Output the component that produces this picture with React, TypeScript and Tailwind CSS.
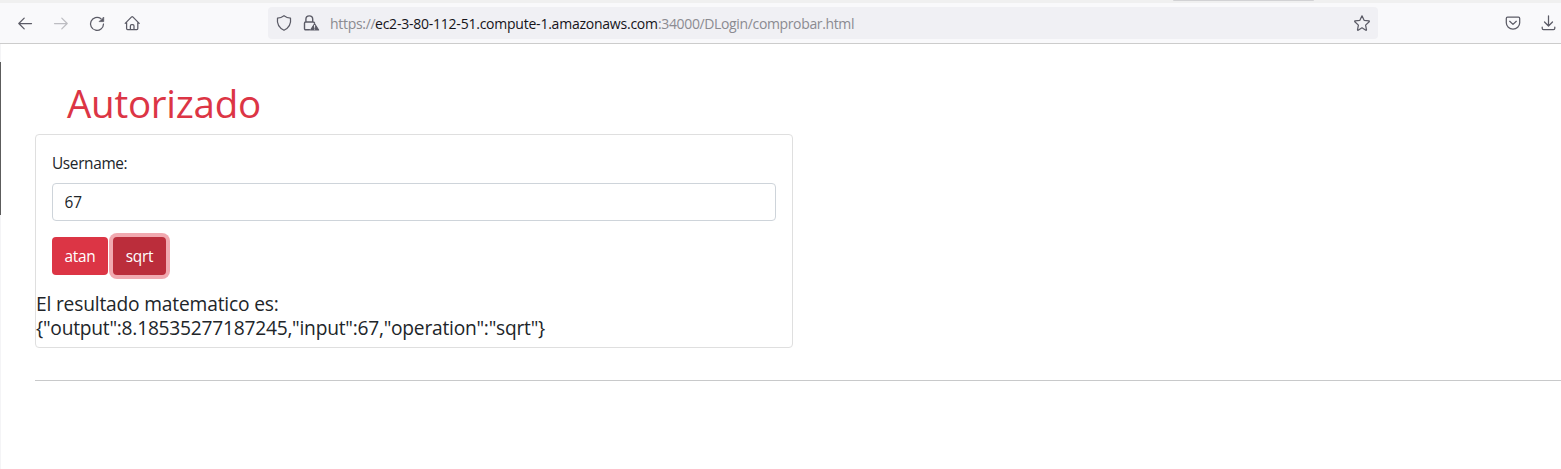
import type { ReactNode } from "react";

function Icon({ children, className = "" }: { children: ReactNode; className?: string }) {
  return (
    <svg
      viewBox="0 0 16 16"
      className={`size-4 shrink-0 overflow-visible ${className}`}
      fill="none"
      stroke="currentColor"
      strokeWidth="1.25"
      strokeLinecap="round"
      strokeLinejoin="round"
    >
      {children}
    </svg>
  );
}

function Toolbar() {
  return (
    <header className="flex h-[44px] flex-col border-b border-[#cccccc] bg-[#f9f9fb] text-[#5b5b66]">
      <div className="flex h-[3px] shrink-0 bg-[#f0f0f0] pl-[1173px]">
        <div className="h-[1px] w-[141px] rounded-b-sm bg-[#d2d2d4]" />
      </div>
      <div className="flex h-[40px] items-center pl-[17px]">
        <Icon>
          <path d="M14.5 8.5H1.8M7.2 3.1 1.8 8.5l5.4 5.4" />
        </Icon>
        <Icon className="ml-5 text-[#bdbdc2]">
          <path d="M1.5 8.5h12.7M8.8 3.1l5.4 5.4-5.4 5.4" />
        </Icon>
        <Icon className="ml-5">
          <path d="M11.8 3.6A6.5 6.5 0 1 0 14.5 9" />
          <path d="M14.7 2.4v4.200H10.500z" fill="currentColor" strokeWidth="0.8" />
        </Icon>
        <Icon className="ml-[19px]">
          <path d="M1.2 8.4 7.6 1.9q.6-.5 1.2 0l6.4 6.5M2.6 7.4v6.1q0 1 1 1h9.2q1 0 1-1V7.4M6.4 14.2v-3.3q0-1.2 1.2-1.2h1.2q1.2 0 1.2 1.2v3.3" />
        </Icon>
        <div className="ml-[128px] flex h-8 w-[1110px] items-center rounded bg-[#f0f0f4] pr-2 pl-2">
          <Icon>
            <path d="M8 .7C10 2.200 12.300 3 14.500 3.200c.7 5.200-1.700 9.800-6.500 12.100C3.200 13 .8 8.400 1.500 3.200 3.700 3 6 2.200 8 .7z" />
          </Icon>
          <Icon className="ml-[11px]">
            <path d="M6.500 14.700H2.700q-1.200 0-1.200-1.200V8.200q0-1.200 1.200-1.200h7.600q1 0 1.200 1M2.900 7V4.300a3.400 3.400 0 0 1 6.800 0V7" strokeWidth="1.4" />
            <path d="M11.600 8.700 15.600 15H7.600z" fill="currentColor" strokeWidth="1.2" />
            <path d="M11.600 10.400v2M11.600 14v.2" stroke="#f0f0f4" strokeWidth="1" />
          </Icon>
          <div className="mt-px ml-[11px] flex font-['Open_Sans','Noto_Sans',sans-serif] text-[14px] leading-5 whitespace-pre text-[#8b8b91]">
            <span className="w-[45px] tracking-[-0.3px]">https://</span>
            <span className="w-[283px] tracking-[-0.23px] text-[#15141a]">ec2-3-80-112-51.compute-1.amazonaws.com</span>
            <span className="tracking-[-0.36px]">:34000/DLogin/comprobar.html</span>
          </div>
          <Icon className="ml-auto">
            <path d="m8 .8 2.100 4.500 4.900.6q.6.200.2.800l-3.600 3.400.9 4.700q0 .7-.7.400L8 12.800l-3.800 2.400q-.7.300-.7-.4l.9-4.700L.8 6.700q-.4-.6.200-.8l4.900-.6z" />
          </Icon>
        </div>
        <Icon className="ml-[127px]">
          <path d="M2.500 2.200h11q1.200 0 1.200 1.200v4.400a6.700 6.300 0 0 1-13.400 0V3.400q0-1.200 1.200-1.200zM4.700 6.300 8 9.400l3.300-3.100" />
        </Icon>
        <Icon className="ml-5">
          <path d="M7.500.8v10.100M3.500 7l4 4 4-4M1.200 12v1.200q0 1.300 1.300 1.300h10q1.300 0 1.300-1.300V12" />
        </Icon>
      </div>
    </header>
  );
}

export default function App() {
  return (
    <div className="h-[469px] w-[1561px] overflow-hidden bg-white font-['Open_Sans','Noto_Sans',sans-serif] text-[15.4px] leading-6 text-[#212529]">
      <Toolbar />
      <div className="flex h-[425px]">
        <div className="w-px shrink-0 bg-[#f4f4f6] pt-[18px]">
          <div className="h-[153px] bg-[#5c5c5c]" />
        </div>
        <main className="grow pt-[35px] pl-[34px]">
          <h1 className="pl-8 text-[38.5px] leading-[48px] tracking-[-0.25px] whitespace-nowrap text-[#dc3545]">Autorizado</h1>
          <section className="mt-[7px] h-[214px] w-[758px] rounded border border-[#dfdfdf]">
            <form className="px-4 pt-[17px]" onSubmit={(e) => e.preventDefault()}>
              <label htmlFor="username" className="block w-fit tracking-[-0.35px]">Username:</label>
              <input
                id="username"
                defaultValue="67"
                className="mt-[7px] block h-[38px] w-full rounded border border-[#ced4da] px-[11.5px] pt-px outline-none"
              />
              <div className="mt-4 flex gap-[5px] tracking-[-0.2px] text-white">
                <button type="button" className="h-[38px] w-[56px] rounded bg-[#dc3545] pt-px whitespace-nowrap">atan</button>
                <button type="button" className="h-[38px] w-[53px] rounded bg-[#bb2d3b] pt-px whitespace-nowrap ring-4 ring-[#f1a9b0]">sqrt</button>
              </div>
            </form>
            <h5 className="mt-[17px] text-[19.2px] leading-6 whitespace-nowrap">
              <span className="block w-fit tracking-[-0.18px]">El resultado matematico es:</span>
              <span className="block w-fit tracking-[-0.24px]">{'{"output":8.18535277187245,"input":67,"operation":"sqrt"}'}</span>
            </h5>
          </section>
          <hr className="mt-8 border-[#c8c9ca]" />
        </main>
      </div>
    </div>
  );
}
